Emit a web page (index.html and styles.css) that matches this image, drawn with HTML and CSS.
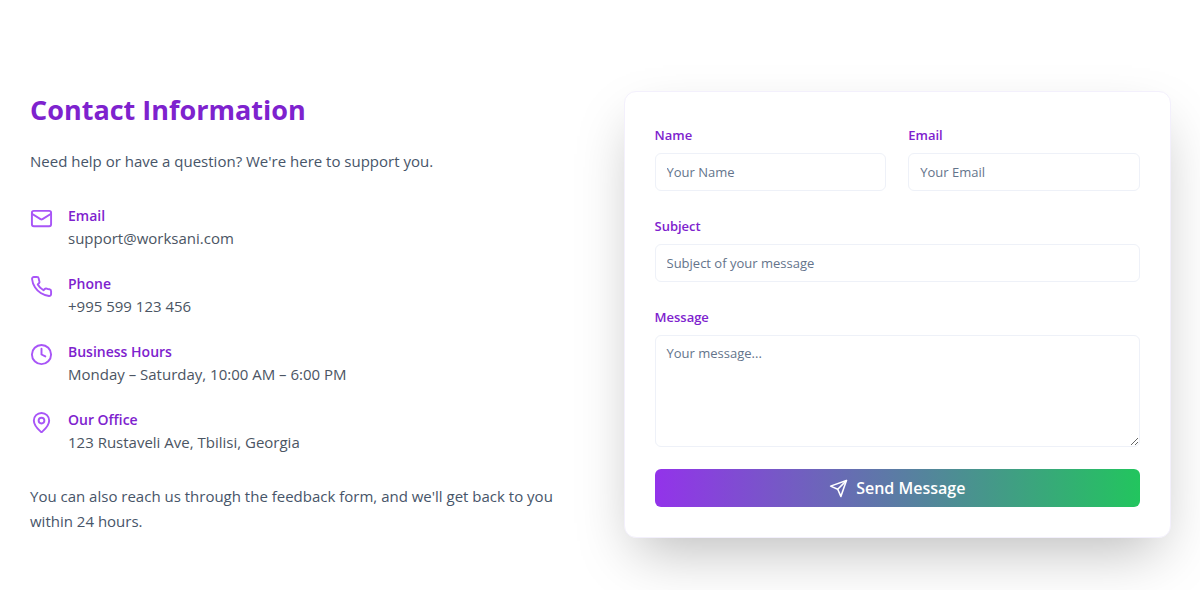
FILE: index.html
```html
<!DOCTYPE html>
<html lang="en">
<head>
<meta charset="utf-8">
<meta name="viewport" content="width=device-width, initial-scale=1">
<title>Contact</title>
<link rel="stylesheet" href="styles.css">
</head>
<body>
<main class="contact">
  <section class="info">
    <h2 class="info-title">Contact Information</h2>
    <p class="info-text">Need help or have a question? We're here to support you.</p>
    <ul class="info-list">
      <li class="info-item">
        <svg class="info-icon" viewBox="0 0 24 24" aria-hidden="true"><rect width="20" height="16" x="2" y="4" rx="2"/><path d="m22 7-8.97 5.7a1.94 1.94 0 0 1-2.06 0L2 7"/></svg>
        <div><h3 class="item-title">Email</h3><p class="item-text">support@worksani.com</p></div>
      </li>
      <li class="info-item">
        <svg class="info-icon" viewBox="0 0 24 24" aria-hidden="true"><path d="M22 16.92v3a2 2 0 0 1-2.18 2 19.79 19.79 0 0 1-8.63-3.07 19.5 19.5 0 0 1-6-6 19.79 19.79 0 0 1-3.07-8.67A2 2 0 0 1 4.11 2h3a2 2 0 0 1 2 1.72 12.84 12.84 0 0 0 .7 2.81 2 2 0 0 1-.45 2.11L8.09 9.91a16 16 0 0 0 6 6l1.27-1.27a2 2 0 0 1 2.11-.45 12.84 12.84 0 0 0 2.81.7A2 2 0 0 1 22 16.92z"/></svg>
        <div><h3 class="item-title">Phone</h3><p class="item-text">+995 599 123 456</p></div>
      </li>
      <li class="info-item">
        <svg class="info-icon" viewBox="0 0 24 24" aria-hidden="true"><circle cx="12" cy="12" r="10"/><path d="M12 6v6l4 2"/></svg>
        <div><h3 class="item-title">Business Hours</h3><p class="item-text">Monday – Saturday, 10:00 AM – 6:00 PM</p></div>
      </li>
      <li class="info-item">
        <svg class="info-icon" viewBox="0 0 24 24" aria-hidden="true"><path d="M20 10c0 4.993-5.539 10.193-7.399 11.799a1 1 0 0 1-1.202 0C9.539 20.193 4 14.993 4 10a8 8 0 0 1 16 0"/><circle cx="12" cy="10" r="3"/></svg>
        <div><h3 class="item-title">Our Office</h3><p class="item-text">123 Rustaveli Ave, Tbilisi, Georgia</p></div>
      </li>
    </ul>
    <p class="info-text">You can also reach us through the feedback form, and we'll get back to you within 24 hours.</p>
  </section>
  <form class="card">
    <div class="row">
      <div class="field"><label class="label" for="name">Name</label><input class="control" id="name" type="text" placeholder="Your Name"></div>
      <div class="field"><label class="label" for="email">Email</label><input class="control" id="email" type="email" placeholder="Your Email"></div>
    </div>
    <div class="field"><label class="label" for="subject">Subject</label><input class="control" id="subject" type="text" placeholder="Subject of your message"></div>
    <div class="field"><label class="label" for="message">Message</label><textarea class="control message" id="message" placeholder="Your message..."></textarea></div>
    <button class="send" type="submit">
      <svg class="send-icon" viewBox="0 0 24 24" aria-hidden="true"><path d="m22 2-7 20-4-9-9-4Z"/><path d="M22 2 11 13"/></svg>
      Send Message
    </button>
  </form>
</main>
</body>
</html>
```

FILE: styles.css
```css
* { box-sizing: border-box; margin: 0; }
body { background: #fff; color: #475569; font-family: "Open Sans", "Noto Sans", sans-serif; font-size: 15px; line-height: 25px; }
.contact { display: grid; grid-template-columns: 1fr 1fr; gap: 46px; align-items: start; padding: 91px 29px 52px 30px; }
.info { display: flex; flex-direction: column; gap: 30px; }
.info-title { color: #7e22ce; font-size: 27px; line-height: 38px; font-weight: 700; margin-bottom: -10px; }
.info-list { list-style: none; padding: 0; display: flex; flex-direction: column; gap: 22px; }
.info-item { display: flex; gap: 15px; }
.info-icon { width: 23px; height: 23px; margin-top: 3px; flex: none; fill: none; stroke: #a855f7; stroke-width: 2; stroke-linecap: round; stroke-linejoin: round; }
.item-title { color: #7e22ce; font-size: 14px; line-height: 23px; font-weight: 600; }
.item-text { color: #4b5563; line-height: 23px; }
.card { display: flex; flex-direction: column; gap: 22px; padding: 30px; background: #fff; border: 1px solid #f3f0fc; border-radius: 12px; box-shadow: 0 24px 54px -12px rgba(0, 0, 0, .27); }
.row { display: grid; grid-template-columns: 1fr 1fr; gap: 22px; }
.field { display: flex; flex-direction: column; gap: 5px; }
.label { color: #7e22ce; font-size: 13px; line-height: 26px; font-weight: 600; }
.control { width: 100%; height: 38px; padding: 8px 11px; border: 1px solid #eef1f8; border-radius: 6px; background: #fff; color: #374151; font-family: inherit; font-size: 13px; line-height: 19px; }
.control::placeholder { color: #64748b; opacity: 1; }
.message { height: 112px; resize: vertical; }
.send { display: flex; align-items: center; justify-content: center; gap: 8px; height: 38px; border: 0; border-radius: 6px; background: linear-gradient(to right, #9333ea, #22c55e); color: #fff; font-family: inherit; font-size: 16px; font-weight: 600; }
.send-icon { width: 19px; height: 19px; fill: none; stroke: currentColor; stroke-width: 2; stroke-linecap: round; stroke-linejoin: round; }
```
